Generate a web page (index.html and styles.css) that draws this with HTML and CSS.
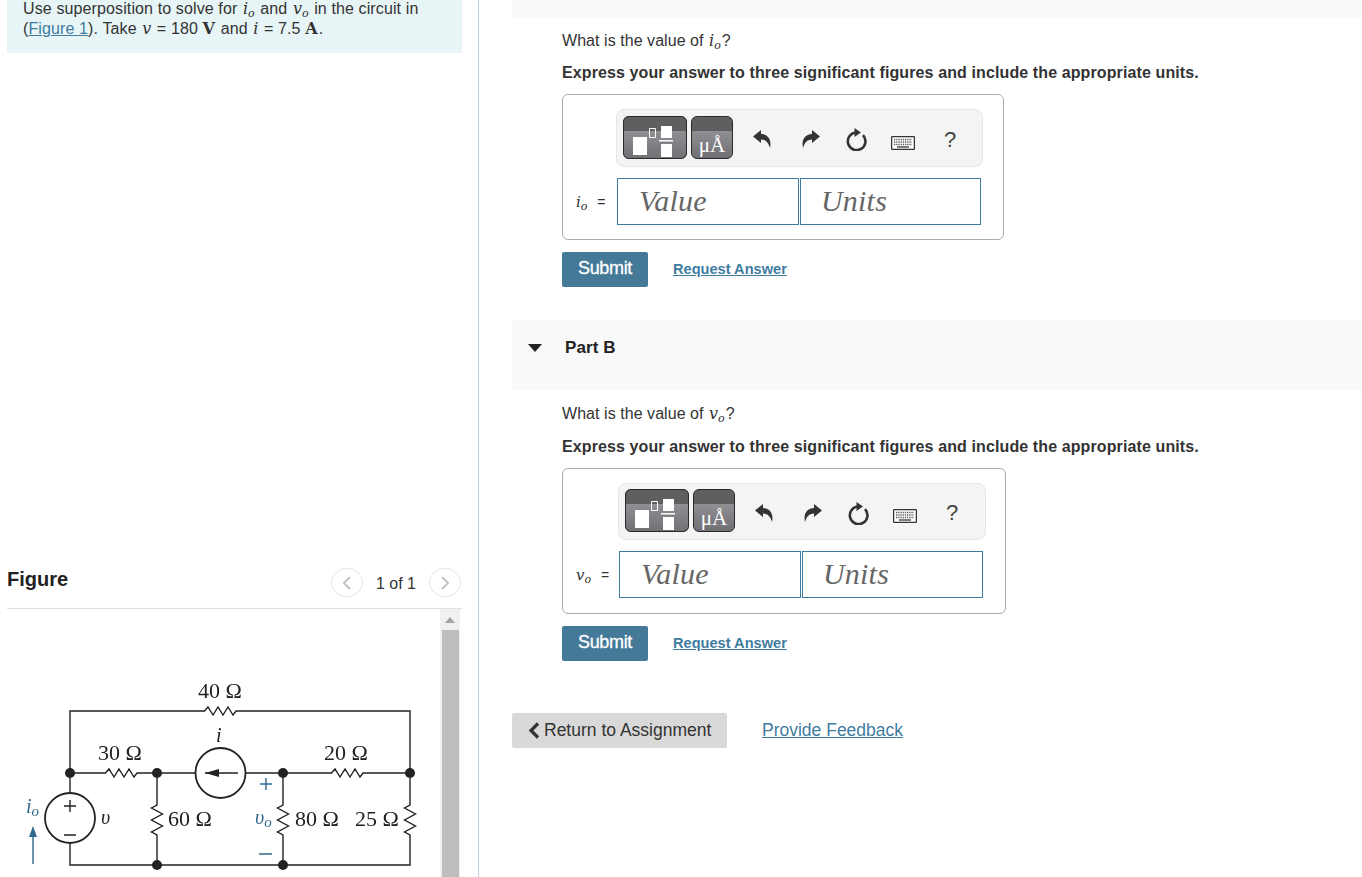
FILE: index.html
```html
<!DOCTYPE html>
<html lang="en">
<head>
<meta charset="utf-8">
<title>Part B</title>
<link rel="stylesheet" href="styles.css">
</head>
<body>
<svg class="defs" width="0" height="0" aria-hidden="true">
  <defs>
    <linearGradient id="tmpl-grad" x1="0" y1="0" x2="0" y2="1"><stop offset="0" stop-color="#908f94"/><stop offset="1" stop-color="#706f74"/></linearGradient>
  </defs>
  <symbol id="undo" viewBox="0 0 18 18"><path d="M0 6.500 8 0v4c6 0 11 5 9 14-1.500-5-4-8.500-9-8.500V13Z"/></symbol>
  <symbol id="redo" viewBox="0 0 18 18"><path d="M18 6.500 10 0v4C4 4-1 9 1 18c1.500-5 4-8.500 9-8.500V13Z"/></symbol>
  <symbol id="reset" viewBox="0 0 21 23"><path d="M10.500 4.500A8.800 8.800 0 1 0 17 7.200" fill="none" stroke="currentColor" stroke-width="2.600"/><path d="M8.500 0 15 4.500 8.500 9Z"/></symbol>
  <symbol id="keys" viewBox="0 0 24 14"><rect x=".6" y=".6" width="22.800" height="12.800" rx="1" fill="#fff" stroke="currentColor" stroke-width="1.300"/><path d="M3 3.500h18M3 6h18M3 8.500h18" stroke="currentColor" stroke-width="1.300" stroke-dasharray="1.300 .9" opacity=".8"/><path d="M6 11h12" stroke="currentColor" stroke-width="1.300"/></symbol>
  <symbol id="frac" viewBox="0 0 64 43"><path fill="#5f5f60" d="M0 0h64v15H0Z"/><path fill="url(#tmpl-grad)" d="M0 15h64v28H0Z"/><path fill="#fff" d="M10 21h14v18H10ZM38 10h11v12H38ZM36 24h14v1.400H36ZM38 28h11v13H38Z"/><path fill="none" stroke="#fff" d="M26.500 12.500h6v9h-6Z"/></symbol>
</svg>

<div class="page">
  <aside class="left">
    <div class="task">
      <p>Use superposition to solve for <i class="m">i<sub>o</sub></i> and <i class="m">v<sub>o</sub></i> in the circuit in<br>(<a href="#fig">Figure 1</a>). Take <i class="m">v</i> = 180 <b class="unit">V</b> and <i class="m">i</i> = 7.5 <b class="unit">A</b>.</p>
    </div>
    <div class="figure-head" id="fig">
      <h2>Figure</h2>
      <div class="pager">
        <span class="pg-btn"><svg width="10" height="14" viewBox="0 0 10 14"><path d="M8 1 2 7l6 6" fill="none" stroke="#c4c4c4" stroke-width="2"/></svg></span>
        <span class="pg-text">1 of 1</span>
        <span class="pg-btn"><svg width="10" height="14" viewBox="0 0 10 14"><path d="m2 1 6 6-6 6" fill="none" stroke="#c4c4c4" stroke-width="2"/></svg></span>
      </div>
    </div>
    <div class="figure-body">
      <svg class="circuit" width="435" height="268" viewBox="7 609 435 268">
        <g fill="none" stroke="#222" stroke-width="1.400">
          <path d="M70 793V711H204.500l3.500-4 5 8 5-8 5 8 5-8 5 8 3 -4H410V805l-5.500 3 11 6-11 6 11 6-11 6 5.500 3V865H283"/>
          <path d="M70 773H105.500l3.500-4 5 8 5-8 5 8 5-8 5 8 3-4H195.500M245.500 773H331.500l3.500-4 5 8 5-8 5 8 5-8 5 8 3-4H410"/>
          <path d="M157 773V805l-5.500 3 11 6-11 6 11 6-11 6 5.500 3V865M283 773V805l-5.500 3 11 6-11 6 11 6-11 6 5.500 3V865M70 843V865H283"/>
          <circle cx="220.500" cy="773" r="25" stroke-width="1.800"/>
          <circle cx="70" cy="818" r="25" stroke-width="1.800"/>
          <path d="M205 773H238M64 806h12M70 800v12M64 835h12"/>
          <path d="M260 784h12M266 778v12M259 854h13" stroke="#31688c"/>
          <path d="M33 864V835" stroke="#31688c"/>
        </g>
        <path d="m205 773 14-4v8Z" fill="#222"/>
        <path d="m33 826 4 11h-8Z" fill="#31688c"/>
        <g fill="#222">
          <circle cx="70" cy="773" r="5"/><circle cx="157" cy="773" r="5"/><circle cx="283" cy="773" r="5"/><circle cx="410" cy="773" r="5"/><circle cx="157" cy="865" r="5"/><circle cx="283" cy="865" r="5"/>
        </g>
        <g class="c-label">
          <text x="198" y="698">40 Ω</text>
          <text x="98" y="760">30 Ω</text>
          <text x="324" y="760">20 Ω</text>
          <text x="168" y="826">60 Ω</text>
          <text x="295" y="826">80 Ω</text>
          <text x="355" y="826">25 Ω</text>
          <text x="216" y="742" class="c-it">i</text>
          <text x="101" y="824" class="c-it">υ</text>
          <text x="255" y="824" class="c-it c-blue">υ<tspan dy="3" class="c-sub">o</tspan></text>
          <text x="26" y="813" class="c-it c-blue">i<tspan dy="3" class="c-sub">o</tspan></text>
        </g>
      </svg>
      <div class="scrollbar"><span class="sb-up"></span><span class="sb-thumb"></span></div>
    </div>
  </aside>

  <main class="right">
    <div class="band band-top"></div>
    <section class="part">
      <p class="q q-first">What is the value of <i class="m">i<sub>o</sub></i>?</p>
      <p class="q q-bold">Express your answer to three significant figures and include the appropriate units.</p>
      <div class="answer">
        <div class="toolbar">
          <svg class="btn-frac" width="64" height="43"><use href="#frac"/></svg>
          <span class="btn-unit">μÅ</span>
          <svg class="ic ic-undo" width="18" height="18"><use href="#undo"/></svg>
          <svg class="ic ic-redo" width="18" height="18"><use href="#redo"/></svg>
          <svg class="ic ic-reset" width="21" height="23"><use href="#reset"/></svg>
          <svg class="ic ic-keys" width="24" height="14"><use href="#keys"/></svg>
          <span class="ic-help">?</span>
        </div>
        <div class="inputs">
          <label class="lbl"><i class="m">i<sub>o</sub></i> =</label>
          <span class="field">Value</span>
          <span class="field">Units</span>
        </div>
      </div>
      <div class="actions">
        <a class="submit" href="#a">Submit</a>
        <a class="req" href="#a">Request Answer</a>
      </div>
    </section>

    <div class="band band-part">
      <span class="tri"></span>
      <h3>Part B</h3>
    </div>

    <section class="part part-b">
      <p class="q q-first">What is the value of <i class="m">v<sub>o</sub></i>?</p>
      <p class="q q-bold">Express your answer to three significant figures and include the appropriate units.</p>
      <div class="answer answer-b">
        <div class="toolbar">
          <svg class="btn-frac" width="64" height="43"><use href="#frac"/></svg>
          <span class="btn-unit">μÅ</span>
          <svg class="ic ic-undo" width="18" height="18"><use href="#undo"/></svg>
          <svg class="ic ic-redo" width="18" height="18"><use href="#redo"/></svg>
          <svg class="ic ic-reset" width="21" height="23"><use href="#reset"/></svg>
          <svg class="ic ic-keys" width="24" height="14"><use href="#keys"/></svg>
          <span class="ic-help">?</span>
        </div>
        <div class="inputs">
          <label class="lbl"><i class="m">v<sub>o</sub></i> =</label>
          <span class="field">Value</span>
          <span class="field">Units</span>
        </div>
      </div>
      <div class="actions">
        <a class="submit" href="#a">Submit</a>
        <a class="req" href="#a">Request Answer</a>
      </div>
    </section>

    <div class="footer">
      <a class="back" href="#a"><svg width="12" height="17" viewBox="0 0 12 17"><path d="M10 1.500 3 8.500l7 7" fill="none" stroke="#333" stroke-width="3.200"/></svg>Return to Assignment</a>
      <a class="feedback" href="#a">Provide Feedback</a>
    </div>
  </main>
</div>
</body>
</html>
```
FILE: styles.css
```css
* { box-sizing: border-box; }
html, body { margin: 0; height: 877px; overflow: hidden; background: #fff; }
body { font-family: "Liberation Sans", Arial, sans-serif; font-size: 16px; color: #333; }
.defs { position: absolute; }
.page { display: flex; height: 877px; }
a { color: #3f7ca0; }

.left { width: 479px; flex: none; padding-left: 7px; border-right: 1px solid #c3d3e6; display: flex; flex-direction: column; }
.task { width: 455px; height: 53px; padding: 0 16px; background: #e8f5f6; overflow: hidden; flex: none; }
.task p { margin: -1px 0 0; line-height: 20px; white-space: nowrap; letter-spacing: .12px; }
.m { font-family: "DejaVu Serif", serif; font-style: italic; font-size: 16px; margin: 0 1px; letter-spacing: 0; }
.m sub { font-size: 11px; line-height: 0; vertical-align: -3px; }
.unit { font-family: "DejaVu Serif", serif; font-size: 16px; margin: 0 1px 0 0; }

.figure-head { width: 455px; height: 56px; margin-top: 500px; padding-bottom: 2px; border-bottom: 1px solid #e0e0e0; display: flex; align-items: center; justify-content: space-between; flex: none; }
.figure-head h2 { margin: 0 0 2px; font-size: 20px; line-height: 24px; color: #222; }
.pager { display: flex; align-items: center; margin-top: 6px; margin-right: 1px; }
.pg-btn { width: 32px; height: 29px; border: 1px solid #e8e8e8; border-radius: 50%; display: flex; align-items: center; justify-content: center; }
.pg-text { margin: 3px 13px 0; }

.figure-body { display: flex; width: 455px; flex: 1; min-height: 0; }
.circuit { flex: none; width: 435px; filter: blur(.35px); }
.c-label { font-family: "Liberation Serif", serif; font-size: 22px; fill: #222; }
.c-it { font-style: italic; font-size: 20px; }
.c-blue { fill: #31688c; }
.c-sub { font-size: 15px; }
.scrollbar { width: 20px; background: #f0f0f0; display: flex; flex-direction: column; align-items: center; margin-left: -2px; }
.sb-up { width: 0; height: 0; border: 5px solid transparent; border-top: 0; border-bottom: 6px solid #a3a3a3; margin: 8px 0 7px; }
.sb-thumb { width: 17px; flex: 1; background: #bdbdbd; }

.right { flex: 1; min-width: 0; padding-left: 33px; }
.band { background: #f9f9f9; }
.band-top { height: 17px; }
.part { padding-left: 50px; }
.q { margin: 0; line-height: 20px; letter-spacing: .05px; }
.q-first { padding-top: 14px; }
.q-bold { font-weight: 700; margin-top: 12px; margin-bottom: 11px; letter-spacing: .11px; }
.part-b .q-bold { margin-top: 13px; margin-bottom: 11px; }

.answer { width: 442px; height: 146px; border: 1px solid #ababab; border-radius: 6px; padding: 14px 0 0 53px; }
.answer-b { width: 444px; padding-left: 55px; }
.toolbar { width: 367px; height: 58px; background: #f4f4f4; border: 1px solid #e6e6e6; border-radius: 8px; padding-left: 6px; display: flex; align-items: center; }
.answer-b .toolbar { width: 368px; height: 57px; }
.btn-frac { flex: none; border-radius: 6px; outline: 1px solid #2a2a2a; outline-offset: -1px; margin-top: -2px; }
.btn-unit { width: 42px; height: 43px; margin: -2px 0 0 4px; padding-top: 13px; border: 1px solid #2a2a2a; border-radius: 6px; background: linear-gradient(#5f5f60 0 14px, #908f94 14px, #706f74); color: #fff; font-family: "Liberation Serif", serif; font-size: 21px; line-height: 30px; text-align: center; white-space: nowrap; flex: none; }
.ic { flex: none; color: #333; fill: #333; }
.ic-undo { margin-left: 20px; margin-top: 2px; }
.ic-redo { margin-left: 31px; margin-top: 2px; }
.ic-reset { margin-left: 26px; margin-top: 3px; }
.ic-keys { margin-left: 24px; margin-top: 9px; }
.ic-help { margin-left: 29px; margin-top: 3px; font-size: 22px; line-height: 22px; color: #444; }

.inputs { display: flex; align-items: stretch; margin: 11px 0 0 -53px; height: 47px; }
.answer-b .inputs { margin-left: -55px; }
.lbl { width: 54px; padding-left: 12px; align-self: center; white-space: nowrap; font-size: 14px; word-spacing: 5px; }
.answer-b .lbl { width: 56px; }
.lbl .m { font-size: 15px; }
.field { width: 182px; border: 1px solid #3f7ca0; padding-left: 21px; font-family: "Liberation Serif", serif; font-style: italic; font-size: 30px; line-height: 43px; color: #666; letter-spacing: .2px; }
.field + .field { width: 181px; margin-left: 1px; padding-left: 20px; }

.actions { display: flex; align-items: center; margin-top: 12px; height: 35px; }
.submit { width: 86px; height: 35px; background: #457998; border-radius: 2px; color: #fff; font-size: 18px; letter-spacing: -.35px; -webkit-text-stroke: .3px #fff; line-height: 33px; text-align: center; text-decoration: none; }
.req { margin-left: 25px; margin-top: -2px; font-size: 14.600px; font-weight: 700; }

.band-part { height: 70px; margin-top: 33px; padding: 18px 0 0 16px; display: flex; align-items: flex-start; gap: 23px; }
.band-part h3 { margin: 0; font-size: 17px; line-height: 20px; color: #222; letter-spacing: .1px; }
.tri { width: 0; height: 0; margin-top: 6px; border: 7.500px solid transparent; border-bottom: 0; border-top: 8px solid #222; }

.footer { display: flex; align-items: center; margin-top: 52px; }
.back { width: 215px; height: 35px; background: #d9d9d9; border-radius: 2px; padding-left: 16px; display: flex; align-items: center; gap: 4px; font-size: 17.500px; color: #333; text-decoration: none; }
.feedback { margin-left: 35px; font-size: 17.500px; }
```
